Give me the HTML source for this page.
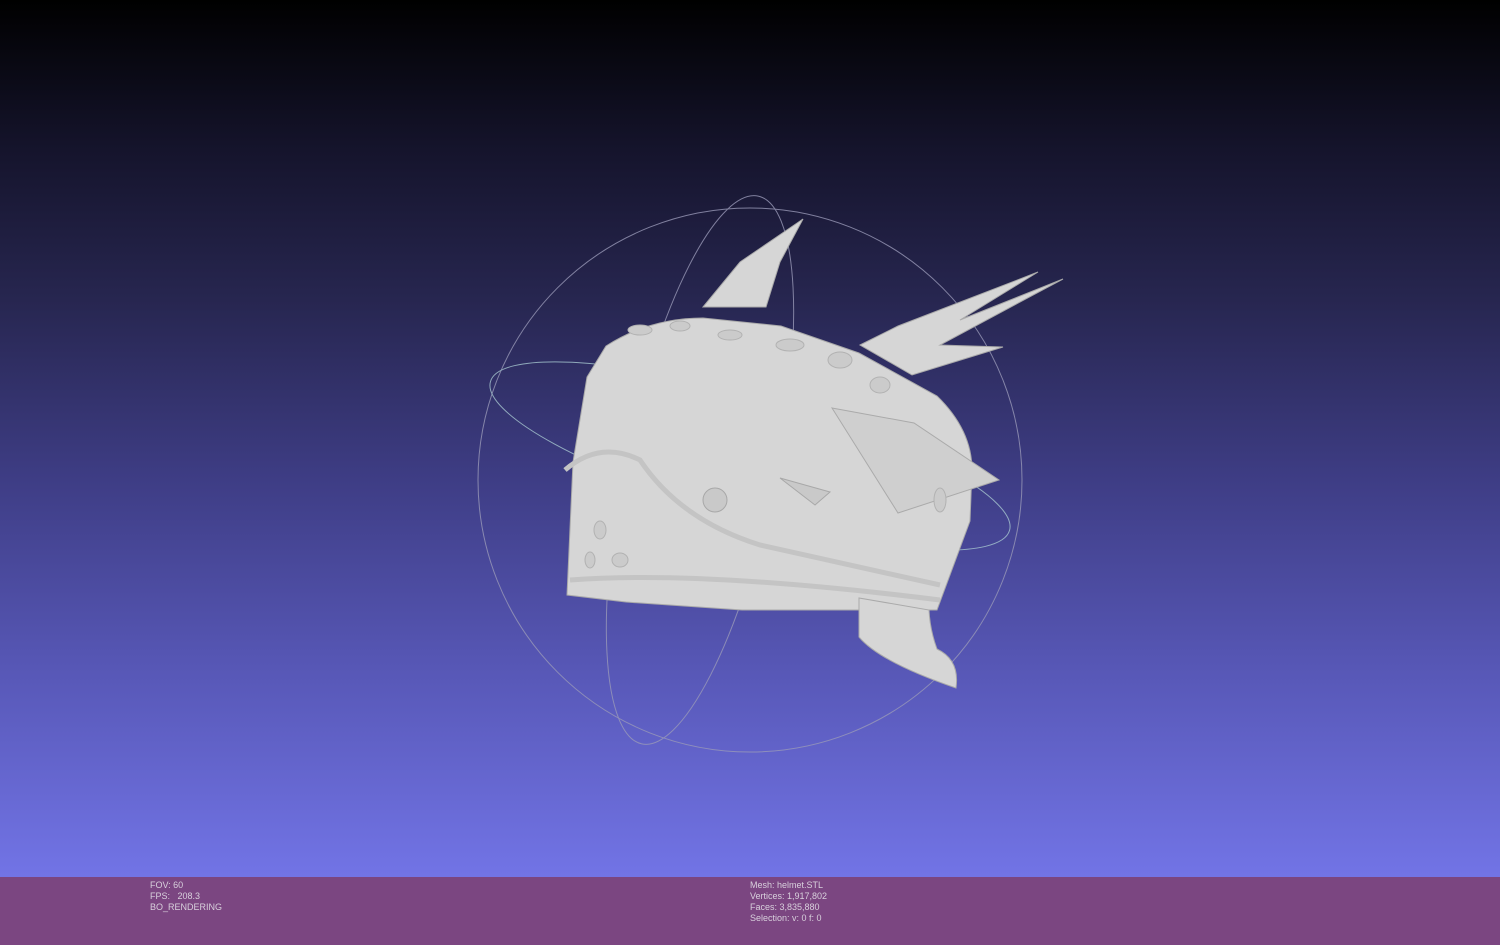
<!DOCTYPE html>
<html><head><style>
html,body{margin:0;padding:0}
body{width:1500px;height:945px;position:relative;overflow:hidden;background:linear-gradient(to bottom,#000 0px,#15142c 150px,#272650 300px,#3e3d85 480px,#5656b4 660px,#7274e6 877px);font-family:"Liberation Sans",sans-serif}
#bar{position:absolute;left:0;top:877px;width:1500px;height:68px;background:#7b4681}
.t{position:absolute;color:#d8d0dc;font-size:9px;line-height:11px;white-space:pre}
svg{position:absolute;left:0;top:0}
</style></head><body>
<svg width="1500" height="877" viewBox="0 0 1500 877">
<g fill="none" stroke="#9a9ab8" stroke-width="1" opacity="0.8">
<circle cx="750" cy="480" r="272"/>
<ellipse cx="750" cy="456" rx="270" ry="60" transform="rotate(16 750 456)" stroke="#a8c8d0"/>
<ellipse cx="700" cy="470" rx="75" ry="280" transform="rotate(12 700 470)"/>
</g>
<g fill="#d6d6d6" stroke="#aaa" stroke-width="1">
<path d="M703 307 L740 262 L803 219 L780 262 L766 307 Z"/>
<path d="M860 345 L898 326 L1038 272 L960 320 L1063 279 L940 345 L1003 347 L912 375 Z"/>
<path d="M567 595 L573 462 L587 377 L606 346 Q650 318 703 318 L781 326 L859 353 L937 396 Q972 430 972 470 L970 521 L937 610 L742 610 L626 602 Z"/>
<path d="M859 598 L859 637 Q880 662 956 688 Q960 660 937 649 Q930 630 929 610 Z"/>
<path d="M832 408 L914 423 L999 480 L898 513 Z" fill="#cfcfcf"/>
</g>
<g fill="#c9c9c9" stroke="#a8a8a8">
<ellipse cx="715" cy="500" rx="12" ry="12"/>
<path d="M780 478 L830 492 L815 505 Z"/>
</g>
<g fill="none" stroke="#c4c4c4" stroke-width="5">
<path d="M565 470 Q600 440 640 460 Q680 520 760 545 L940 585"/>
<path d="M570 580 Q700 570 940 600"/>
</g>
<g fill="#cbcbcb" stroke="#b2b2b2">
<ellipse cx="640" cy="330" rx="12" ry="5"/><ellipse cx="680" cy="326" rx="10" ry="5"/><ellipse cx="730" cy="335" rx="12" ry="5"/><ellipse cx="790" cy="345" rx="14" ry="6"/><ellipse cx="840" cy="360" rx="12" ry="8"/><ellipse cx="880" cy="385" rx="10" ry="8"/>
<ellipse cx="600" cy="530" rx="6" ry="9"/><ellipse cx="620" cy="560" rx="8" ry="7"/><ellipse cx="590" cy="560" rx="5" ry="8"/><ellipse cx="940" cy="500" rx="6" ry="12"/>
</g>
</svg>
<div id="bar"></div>
<div class="t" style="left:150px;top:880px">FOV: 60
FPS:   208.3
BO_RENDERING</div>
<div class="t" style="left:750px;top:880px">Mesh: helmet.STL
Vertices: 1,917,802
Faces: 3,835,880
Selection: v: 0 f: 0</div>
</body></html>
